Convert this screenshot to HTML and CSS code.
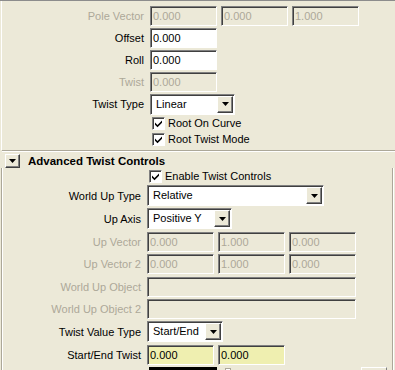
FILE: index.html
```html
<!DOCTYPE html>
<html lang="en">
<head>
    <meta charset="UTF-8">
    <title>Twist Attributes</title>
    <link rel="stylesheet" href="styles.css">
</head>
<body>
    <div class="panel">
        <div class="attrs">
            <div class="row">
                <span class="label off">Pole Vector</span>
                <span class="field off">0.000</span>
                <span class="field off">0.000</span>
                <span class="field off">1.000</span>
            </div>
            <div class="row">
                <span class="label">Offset</span>
                <span class="field">0.000</span>
            </div>
            <div class="row">
                <span class="label">Roll</span>
                <span class="field">0.000</span>
            </div>
            <div class="row">
                <span class="label off">Twist</span>
                <span class="field off">0.000</span>
            </div>
            <div class="row">
                <span class="label">Twist Type</span>
                <div class="select short">
                    <span class="select-text">Linear</span>
                    <span class="arrow"><svg width="7" height="4"><path d="M0 0h7L3.5 4z"/></svg></span>
                </div>
            </div>
            <div class="row check">
                <span class="label"></span>
                <span class="box"><svg width="9" height="9"><path d="M1 3.5l2.5 2.5L8 1.5v2.2L3.5 8.2 1 5.7z"/></svg></span>
                <span class="check-text">Root On Curve</span>
            </div>
            <div class="row check">
                <span class="label"></span>
                <span class="box"><svg width="9" height="9"><path d="M1 3.5l2.5 2.5L8 1.5v2.2L3.5 8.2 1 5.7z"/></svg></span>
                <span class="check-text">Root Twist Mode</span>
            </div>
        </div>

        <div class="frame">
            <div class="frame-head">
                <span class="expander"><svg width="7" height="4"><path d="M0 0h7L3.5 4z"/></svg></span>
                <span class="frame-title">Advanced Twist Controls</span>
            </div>
            <div class="frame-body">
                <div class="row check">
                    <span class="label"></span>
                    <span class="box"><svg width="9" height="9"><path d="M1 3.5l2.5 2.5L8 1.5v2.2L3.5 8.2 1 5.7z"/></svg></span>
                    <span class="check-text">Enable Twist Controls</span>
                </div>
                <div class="row tall">
                    <span class="label">World Up Type</span>
                    <div class="select wide">
                        <span class="select-text">Relative</span>
                        <span class="arrow"><svg width="7" height="4"><path d="M0 0h7L3.5 4z"/></svg></span>
                    </div>
                </div>
                <div class="row tall">
                    <span class="label">Up Axis</span>
                    <div class="select short">
                        <span class="select-text">Positive Y</span>
                        <span class="arrow"><svg width="7" height="4"><path d="M0 0h7L3.5 4z"/></svg></span>
                    </div>
                </div>
                <div class="row tall">
                    <span class="label off">Up Vector</span>
                    <span class="field off">0.000</span>
                    <span class="field off">1.000</span>
                    <span class="field off">0.000</span>
                </div>
                <div class="row">
                    <span class="label off">Up Vector 2</span>
                    <span class="field off">0.000</span>
                    <span class="field off">1.000</span>
                    <span class="field off">0.000</span>
                </div>
                <div class="row tall">
                    <span class="label off">World Up Object</span>
                    <span class="field off long"></span>
                </div>
                <div class="row">
                    <span class="label off">World Up Object 2</span>
                    <span class="field off long"></span>
                </div>
                <div class="row tall">
                    <span class="label">Twist Value Type</span>
                    <div class="select mid">
                        <span class="select-text">Start/End</span>
                        <span class="arrow"><svg width="7" height="4"><path d="M0 0h7L3.5 4z"/></svg></span>
                    </div>
                </div>
                <div class="row tall">
                    <span class="label">Start/End Twist</span>
                    <span class="field keyed">0.000</span>
                    <span class="field keyed">0.000</span>
                </div>
                <div class="row last">
                    <span class="label"></span>
                    <span class="swatch"></span>
                    <span class="thumb"></span>
                    <span class="map-btn"></span>
                </div>
            </div>
        </div>
    </div>
</body>
</html>
```

FILE: styles.css
```css
body {
    margin: 0;
    background-color: #ece9d8;
    font-family: "Liberation Sans", Arial, sans-serif;
    font-size: 11px;
    color: #000;
    overflow: hidden;
}
.panel {
    width: 395px;
    height: 370px;
    box-sizing: border-box;
    border-top: 1px solid #8c8c8c;
    overflow: hidden;
}
.attrs {
    padding-top: 4px;
    padding-bottom: 3px;
    border-left: 1px solid #fff;
    margin-left: 1px;
}

.row {
    display: flex;
    align-items: center;
    gap: 4px;
    height: 22px;
}
.row.tall {
    height: 23px;
}
.row.check {
    height: 16px;
}
.row.last {
    align-items: flex-start;
    padding-top: 1px;
}
.label {
    flex: 0 0 146px;
    margin-right: -2px;
    padding-right: 4px;
    box-sizing: border-box;
    text-align: right;
    white-space: nowrap;
}
.frame-body .label {
    flex-basis: 142px;
}
.off {
    color: #aca899;
}

.field {
    width: 67px;
    height: 20px;
    box-sizing: border-box;
    padding: 0 2px;
    line-height: 18px;
    background-color: #fff;
    border: 1px solid;
    border-color: #808080 #fff #fff #808080;
    box-shadow: inset 1px 1px 0 #404040;
}
.field.off {
    background-color: #ece9d8;
}
.field.long {
    width: 209px;
}
.field.keyed {
    background-color: #efefb0;
}

.select {
    display: flex;
    height: 21px;
    box-sizing: border-box;
    background-color: #fff;
    border: 1px solid;
    border-color: #808080 #fff #fff #808080;
    box-shadow: inset 1px 1px 0 #404040;
    padding: 1px 1px 1px 2px;
}
.select.short {
    width: 85px;
}
.select.mid {
    width: 76px;
}
.select.wide {
    width: 177px;
}
.select-text {
    flex: 1;
    padding-left: 3px;
    line-height: 17px;
    white-space: nowrap;
    overflow: hidden;
}
.arrow,
.expander {
    display: flex;
    align-items: center;
    justify-content: center;
    box-sizing: border-box;
    background-color: #ece9d8;
    border: 1px solid;
    border-color: #fff #404040 #404040 #fff;
    box-shadow: inset -1px -1px 0 #808080;
}
.arrow {
    width: 16px;
}

.box {
    display: flex;
    align-items: center;
    justify-content: center;
    width: 13px;
    height: 13px;
    margin-left: 2px;
    box-sizing: border-box;
    background-color: #fff;
    border: 1px solid;
    border-color: #808080 #fff #fff #808080;
    box-shadow: inset 1px 1px 0 #404040;
}
.check-text {
    margin-left: -1px;
    white-space: nowrap;
}

.frame-head {
    display: flex;
    align-items: center;
    height: 17px;
    border-top: 1px solid #aca899;
    box-shadow: inset 0 1px 0 #fff;
    margin-left: 2px;
}
.expander {
    width: 15px;
    height: 14px;
    margin-left: 3px;
    align-self: flex-end;
}
.frame-title {
    margin-left: 8px;
    margin-top: 2px;
    font-weight: bold;
    font-size: 11.5px;
}
.frame-body {
    margin-left: 1px;
    margin-right: 1px;
    border-left: 1px solid #aca899;
    box-shadow: inset 1px 0 0 #fff, inset -1px 0 0 #aca899;
    border-right: 1px solid #fff;
    padding-left: 1px;
    height: 230px;
}

.swatch {
    width: 68px;
    height: 20px;
    margin-left: 2px;
    background-color: #000;
}
.thumb {
    width: 4px;
    height: 10px;
    margin-left: 4px;
    margin-top: 1px;
    background-color: #fff;
    border: 1px solid #aca899;
}
.map-btn {
    width: 26px;
    height: 20px;
    margin-left: auto;
    margin-right: 6px;
    box-sizing: border-box;
    border: 1px solid;
    border-color: #fff #808080 #808080 #fff;
}
```
